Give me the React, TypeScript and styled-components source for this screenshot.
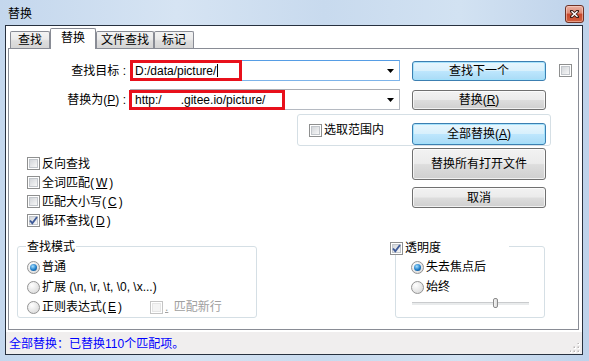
import React from 'react'
import styled, { createGlobalStyle } from 'styled-components'

const Check = ({ checked, disabled }: { checked?: boolean; disabled?: boolean }) => (
  <Box $disabled={disabled}>
    {checked ? (
      <Tick viewBox="0 0 13 13">
        <path d="M3 6.5 L5.3 9.2 L10 3" />
      </Tick>
    ) : null}
  </Box>
)

const App = () => {
  return (
    <>
      <GlobalStyle />
      <Frame>
        <TitleBar>
          <Title>替换</Title>
          <Close>
            <svg width="9" height="8" viewBox="0 0 9 8">
              <path d="M1.5 1.2 L7.5 6.8 M7.5 1.2 L1.5 6.8" stroke="#3a1a12" strokeWidth="3.2" strokeLinecap="square" />
              <path d="M1.5 1.2 L7.5 6.8 M7.5 1.2 L1.5 6.8" stroke="#fff" strokeWidth="1.5" />
            </svg>
          </Close>
        </TitleBar>

        <Client>
          <Tabs>
            <Tab $w={40}>查找</Tab>
            <Tab $w={46} $active>替换</Tab>
            <Tab $w={58}>文件查找</Tab>
            <Tab $w={40}>标记</Tab>
          </Tabs>

          <Panel>
            <Fields>
              <Label>查找目标 :</Label>
              <Combo $focused>
                <ComboText>D:/data/picture/<Caret /></ComboText>
                <Arrow viewBox="0 0 7 4"><path d="M0 0 H7 L3.5 4 Z" /></Arrow>
                <Mark $left={-1} $top={-1} $w={112} $h={21} />
              </Combo>
              <Button $primary>查找下一个</Button>
              <CheckCell><Check /></CheckCell>

              <Label>替换为(<u>P</u>) :</Label>
              <Combo>
                <ComboText>http:/<Blank />.gitee.io/picture/</ComboText>
                <Arrow viewBox="0 0 7 4"><path d="M0 0 H7 L3.5 4 Z" /></Arrow>
                <Mark $left={-2} $top={0} $w={156} $h={20} />
              </Combo>
              <Button>替换(<u>R</u>)</Button>
              <span />
            </Fields>

            <ScopeRow>
              <ScopeGroup>
                <Option><Check />选取范围内</Option>
                <Button $primary $h={22}>全部替换(<u>A</u>)</Button>
              </ScopeGroup>
            </ScopeRow>

            <Middle>
              <Options>
                <Option $h={19}><Check />反向查找</Option>
                <Option $h={19}><Check />全词匹配(<u>W</u>)</Option>
                <Option $h={19}><Check />匹配大小写(<u>C</u>)</Option>
                <Option $h={19}><Check checked />循环查找(<u>D</u>)</Option>
              </Options>
              <Actions>
                <Button $h={32}>替换所有打开文件</Button>
                <Button $h={21}>取消</Button>
              </Actions>
            </Middle>

            <Bottom>
              <Group $w={240} $pl={9}>
                <GroupTitle $left={8} $top={-7}>查找模式</GroupTitle>
                <Option $h={20}><Radio $on />普通</Option>
                <Option $h={20}><Radio />扩展 (\n, \r, \t, \0, \x...)</Option>
                <Option $h={20}>
                  <Cell><Radio />正则表达式(<u>E</u>)</Cell>
                  <Option $disabled><Check disabled /><u>.</u> 匹配新行</Option>
                </Option>
              </Group>

              <Group $w={150} $pl={15}>
                <GroupTitle $left={-7} $top={-6} $w={118}><Check checked />透明度</GroupTitle>
                <Option $h={20}><Radio $on />失去焦点后</Option>
                <Option $h={20}><Radio />始终</Option>
                <Slider>
                  <Track />
                  <Thumb />
                </Slider>
              </Group>
            </Bottom>
          </Panel>

          <Status>
            全部替换：已替换110个匹配项。
            <Grip width="10" height="10" viewBox="0 0 10 10">
              {[[8, 0], [4, 4], [8, 4], [0, 8], [4, 8], [8, 8]].map(([x, y]) => (
                <g key={`${x}-${y}`}>
                  <rect x={x} y={y} width="2" height="2" fill="#fff" />
                  <rect x={x - 0.5} y={y - 0.5} width="1.5" height="1.5" fill="#b9b6b6" />
                </g>
              ))}
            </Grip>
          </Status>
        </Client>
      </Frame>
    </>
  )
}

export default App

const GlobalStyle = createGlobalStyle`
  body {
    margin: 0;
    font-family: "Liberation Sans", "Noto Sans CJK SC", sans-serif;
    font-size: 12px;
    color: #000;
  }
  u { text-decoration: underline; text-underline-offset: 1px; }
`

const Frame = styled.div`
  width: 589px;
  height: 361px;
  box-sizing: border-box;
  display: flex;
  flex-direction: column;
  padding: 0 6px 6px 5px;
  background: linear-gradient(90deg, #c4d7ed 0%, #d6e4f3 30%, #c8daee 55%, #d2e2f2 78%, #bed2ea 100%);
`

const TitleBar = styled.div`
  height: 25px;
  flex: none;
  display: flex;
  align-items: flex-start;
  justify-content: space-between;
  padding: 5px 0 0 3px;
  box-sizing: border-box;
`

const Title = styled.div`
  line-height: 18px;
  font-size: 12px;
`

const Close = styled.div`
  width: 19px;
  height: 18px;
  margin-right: -1px;
  box-sizing: border-box;
  border: 1px solid #6e3226;
  border-radius: 3px;
  background: linear-gradient(#eab0a2, #dd8a74 45%, #c8452a 50%, #d0603e 100%);
  box-shadow: inset 0 0 0 1px rgba(255, 220, 210, 0.5);
  display: flex;
  align-items: center;
  justify-content: center;
`

const Client = styled.div`
  flex: 1;
  display: flex;
  flex-direction: column;
  background: #fff;
  border: 1px solid #27313f;
`

const Tabs = styled.div`
  height: 20px;
  margin: 2px 0 0 4px;
  display: flex;
  align-items: flex-end;
  position: relative;
  z-index: 1;
`

const Tab = styled.div<{ $w: number; $active?: boolean }>`
  width: ${(p) => p.$w}px;
  height: ${(p) => (p.$active ? 21 : 17)}px;
  margin-bottom: ${(p) => (p.$active ? -1 : 0)}px;
  box-sizing: border-box;
  border: 1px solid #898c95;
  border-bottom: none;
  border-radius: 2px 2px 0 0;
  background: ${(p) =>
    p.$active ? '#fff' : 'linear-gradient(#f3f3f3, #ebebeb 45%, #dedede 55%, #d5d5d5)'};
  display: flex;
  align-items: center;
  justify-content: center;
  padding-bottom: ${(p) => (p.$active ? 2 : 0)}px;
  font-size: 12px;
  line-height: 14px;
`

const Panel = styled.div`
  height: 282px;
  box-sizing: border-box;
  margin: 0 3px 2px 2px;
  border: 1px solid #898c95;
  display: flex;
  flex-direction: column;
`

const Fields = styled.div`
  display: grid;
  grid-template-columns: 121px 270px auto auto;
  grid-auto-rows: 21px;
  row-gap: 8px;
  margin-top: 11px;
`

const Label = styled.div`
  align-self: center;
  text-align: right;
  padding-right: 4px;
  line-height: 14px;
`

const Combo = styled.div<{ $focused?: boolean }>`
  position: relative;
  height: 21px;
  box-sizing: border-box;
  border: 1px solid ${(p) => (p.$focused ? '#7eb4ea' : '#b5bac2')};
  border-top-color: ${(p) => (p.$focused ? '#569de5' : '#abadb3')};
  display: flex;
  align-items: center;
  padding: 0 4px 0 4px;
  background: #fff;
`

const ComboText = styled.div`
  flex: 1;
  display: flex;
  align-items: center;
  white-space: pre;
  line-height: 14px;
`

const Caret = styled.span`
  display: inline-block;
  width: 1px;
  height: 13px;
  background: #000;
  margin-left: 1px;
`

const Blank = styled.span`
  display: inline-block;
  width: 19px;
`

const Arrow = styled.svg`
  width: 7px;
  height: 4px;
  fill: #000;
  margin-right: 1px;
`

const Mark = styled.div<{ $left: number; $top: number; $w: number; $h: number }>`
  position: absolute;
  left: ${(p) => p.$left}px;
  top: ${(p) => p.$top}px;
  width: ${(p) => p.$w}px;
  height: ${(p) => p.$h}px;
  box-sizing: border-box;
  border: 3px solid #e8101b;
  pointer-events: none;
`

const Button = styled.div<{ $primary?: boolean; $h?: number }>`
  width: 134px;
  height: ${(p) => p.$h ?? 20}px;
  box-sizing: border-box;
  margin-left: 12px;
  align-self: end;
  border: 1px solid ${(p) => (p.$primary ? '#3c7fb1' : '#707070')};
  border-radius: 3px;
  background: ${(p) =>
    p.$primary
      ? 'linear-gradient(#e8f6fd, #d8f0fc 48%, #bde6fd 52%, #a9dbf6)'
      : 'linear-gradient(#f2f2f2, #ebebeb 48%, #dddddd 52%, #cfcfcf)'};
  box-shadow: inset 0 0 0 1px ${(p) => (p.$primary ? 'rgba(160, 225, 252, 0.9)' : 'rgba(255, 255, 255, 0.7)')};
  display: flex;
  align-items: center;
  justify-content: center;
  line-height: 14px;
  flex: none;
`

const CheckCell = styled.div`
  margin-left: 7px;
  align-self: center;
  display: flex;
`

const Box = styled.span<{ $disabled?: boolean }>`
  position: relative;
  flex: none;
  width: 13px;
  height: 13px;
  box-sizing: border-box;
  border: 1px solid ${(p) => (p.$disabled ? '#c4c4c4' : '#8e8f8f')};
  background: #fff;
  padding: 1px;
  &::before {
    content: '';
    display: block;
    width: 100%;
    height: 100%;
    box-sizing: border-box;
    border: 1px solid ${(p) => (p.$disabled ? '#e6e6e6' : '#c2c6cb')};
    background: ${(p) =>
      p.$disabled ? '#f4f4f4' : 'linear-gradient(135deg, #d3d6da, #f7f7f7)'};
  }
`

const Tick = styled.svg`
  position: absolute;
  left: -1px;
  top: -1px;
  width: 13px;
  height: 13px;
  fill: none;
  stroke: #3f5b99;
  stroke-width: 1.9;
`

const Radio = styled.span<{ $on?: boolean }>`
  flex: none;
  width: 13px;
  height: 13px;
  box-sizing: border-box;
  border-radius: 50%;
  border: 1px solid #949494;
  background: radial-gradient(circle at 35% 30%, #ffffff, #dcdcdc 80%);
  display: flex;
  align-items: center;
  justify-content: center;
  &::after {
    content: '';
    display: ${(p) => (p.$on ? 'block' : 'none')};
    width: 7px;
    height: 7px;
    border-radius: 50%;
    background: radial-gradient(circle at 40% 35%, #a6e0ff, #1d7cc8 55%, #0b3e73);
  }
`

const Option = styled.div<{ $h?: number; $disabled?: boolean }>`
  display: flex;
  align-items: center;
  gap: 2px;
  height: ${(p) => (p.$h ? `${p.$h}px` : 'auto')};
  line-height: 14px;
  white-space: pre;
  color: ${(p) => (p.$disabled ? '#a0a0a0' : 'inherit')};
`

const Cell = styled.div`
  width: 121px;
  display: flex;
  align-items: center;
  gap: 2px;
`

const ScopeRow = styled.div`
  display: flex;
  justify-content: flex-end;
  margin-top: 4px;
  padding-right: 27px;
`

const ScopeGroup = styled.div`
  width: 254px;
  height: 32px;
  box-sizing: border-box;
  border: 1px solid #d5dfe5;
  border-radius: 3px;
  display: flex;
  align-items: center;
  justify-content: space-between;
  padding: 0 4px 0 11px;
`

const Middle = styled.div`
  display: flex;
  justify-content: space-between;
  align-items: flex-start;
`

const Options = styled.div`
  display: flex;
  flex-direction: column;
  padding: 8px 0 0 18px;
`

const Actions = styled.div`
  display: flex;
  flex-direction: column;
  gap: 7px;
  margin: 2px 32px 0 0;
`

const Bottom = styled.div`
  display: flex;
  justify-content: space-between;
  margin-top: 16px;
  padding: 0 33px 0 8px;
`

const Group = styled.div<{ $w: number; $pl: number }>`
  position: relative;
  width: ${(p) => p.$w}px;
  height: 72px;
  box-sizing: border-box;
  border: 1px solid #d5dfe5;
  border-radius: 3px;
  padding: 10px 0 0 ${(p) => p.$pl}px;
`

const GroupTitle = styled.div<{ $left: number; $top: number; $w?: number }>`
  position: absolute;
  left: ${(p) => p.$left}px;
  top: ${(p) => p.$top}px;
  width: ${(p) => (p.$w ? `${p.$w}px` : 'auto')};
  display: flex;
  align-items: center;
  gap: 2px;
  padding: 0 1px;
  background: #fff;
  line-height: 14px;
`

const Slider = styled.div`
  position: relative;
  width: 117px;
  height: 13px;
  margin-left: 1px;
  display: flex;
  align-items: center;
`

const Track = styled.div`
  width: 100%;
  height: 3px;
  box-sizing: border-box;
  border-top: 1px solid #c9cbcd;
  background: #e9ebec;
`

const Thumb = styled.div`
  position: absolute;
  left: 81px;
  top: 1px;
  width: 5px;
  height: 10px;
  box-sizing: border-box;
  border: 1px solid #8a8a8a;
  border-radius: 2px;
  background: linear-gradient(90deg, #f4f4f4, #dcdcdc);
`

const Status = styled.div`
  height: 22px;
  box-sizing: border-box;
  background: #f0eeee;
  color: #0000ff;
  display: flex;
  align-items: center;
  padding: 1px 2px 0 3px;
  line-height: 14px;
  position: relative;
`

const Grip = styled.svg`
  margin-left: auto;
  align-self: flex-end;
  margin-bottom: 1px;
`
